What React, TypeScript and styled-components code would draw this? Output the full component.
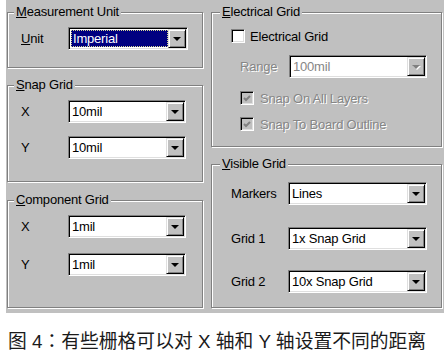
import React from 'react';
import styled, { createGlobalStyle } from 'styled-components';

const GlobalStyle = createGlobalStyle`
    html, body {
        margin: 0;
        padding: 0;
        background: #fff;
    }
    body {
        font-family: "Liberation Sans", Arial, sans-serif;
    }
`;

const Page = styled.div`
    width: 447px;
    height: 361px;
    padding-left: 6px;
    box-sizing: border-box;
`;

const Dialog = styled.div`
    width: 438px;
    height: 313px;
    box-sizing: border-box;
    padding: 12px 0 0 1px;
    background: #c0c0c0;
    display: grid;
    grid-template-columns: 196px 231px;
    column-gap: 8px;
    align-items: start;
    font-size: 13px;
    letter-spacing: -0.2px;
    color: #000;
`;

const Column = styled.div`
    display: flex;
    flex-direction: column;
`;

const Group = styled.div<{ $h: number; $mt?: number; $pl: number }>`
    height: ${({ $h }) => $h}px;
    margin-top: ${({ $mt }) => $mt ?? 0}px;
    padding-left: ${({ $pl }) => $pl}px;
    box-sizing: border-box;
    border: 1px solid #808080;
    box-shadow: inset 1px 1px 0 #fff, 1px 1px 0 #fff;
    display: flex;
    flex-direction: column;
`;

const Legend = styled.div<{ $ml: number }>`
    align-self: flex-start;
    height: 16px;
    line-height: 16px;
    margin: -9px 0 0 ${({ $ml }) => $ml}px;
    padding: 0 2px;
    background: #c0c0c0;
    white-space: nowrap;
`;

const Row = styled.div<{ $mt: number; $indent?: number }>`
    display: flex;
    align-items: center;
    height: 23px;
    margin-top: ${({ $mt }) => $mt}px;
    padding-left: ${({ $indent }) => $indent ?? 0}px;
`;

const CheckRow = styled(Row)`
    height: 16px;
    gap: ${({ $indent }) => ($indent ? 6 : 5)}px;
`;

const Label = styled.span<{ $w?: number; $disabled?: boolean }>`
    width: ${({ $w }) => ($w ? `${$w}px` : 'auto')};
    flex: none;
    white-space: nowrap;
    color: ${({ $disabled }) => ($disabled ? '#868686' : '#000')};
    text-shadow: ${({ $disabled }) => ($disabled ? '1px 1px 0 #fff' : 'none')};
`;

const Combo = styled.div<{ $w: number }>`
    width: ${({ $w }) => $w}px;
    height: 23px;
    box-sizing: border-box;
    padding: 1px;
    display: flex;
    background: #fff;
    border: 1px solid;
    border-color: #808080 #fff #fff #808080;
    box-shadow: inset 1px 1px 0 #000, inset -1px -1px 0 #dfdfdf;
`;

const Field = styled.div<{ $selected?: boolean; $disabled?: boolean }>`
    flex: 1;
    display: flex;
    align-items: center;
    box-sizing: border-box;
    margin: ${({ $selected }) => ($selected ? '1px 0 1px 1px' : '0')};
    padding-left: ${({ $selected }) => ($selected ? '1px' : '2px')};
    background: ${({ $selected }) => ($selected ? '#000080' : 'transparent')};
    border: ${({ $selected }) => ($selected ? '1px dotted #d6d690' : 'none')};
    color: ${({ $selected, $disabled }) => ($selected ? '#fff' : $disabled ? '#868686' : '#000')};
    white-space: nowrap;
`;

const DropButton = styled.div`
    width: 18px;
    flex: none;
    box-sizing: border-box;
    background: #c0c0c0;
    border: 1px solid;
    border-color: #dfdfdf #000 #000 #dfdfdf;
    box-shadow: inset 1px 1px 0 #fff, inset -1px -1px 0 #808080;
    display: flex;
    align-items: center;
    justify-content: center;
`;

const Arrow = styled.span<{ $disabled?: boolean }>`
    width: 0;
    height: 0;
    border-left: 4px solid transparent;
    border-right: 4px solid transparent;
    border-top: 4px solid ${({ $disabled }) => ($disabled ? '#808080' : '#000')};
    filter: ${({ $disabled }) => ($disabled ? 'drop-shadow(1px 1px 0 #fff)' : 'none')};
`;

const CheckBox = styled.span<{ $disabled?: boolean }>`
    width: 14px;
    height: 14px;
    flex: none;
    box-sizing: border-box;
    border: 1px solid;
    border-color: #808080 #fff #fff #808080;
    box-shadow: inset 1px 1px 0 #000, inset -1px -1px 0 #dfdfdf;
    background: ${({ $disabled }) => ($disabled ? '#c0c0c0' : '#fff')};
    display: flex;
    align-items: center;
    justify-content: center;
`;

const Caption = styled.div`
    margin-top: 15px;
    padding-left: 2px;
    height: 24px;
    line-height: 24px;
    font-family: "Liberation Sans", "Noto Sans CJK SC", sans-serif;
    font-size: 18.8px;
    color: #1a1a1a;
    white-space: nowrap;
`;

const FullColon = styled.span`
    font-family: "Noto Sans CJK TC", "Noto Sans CJK SC", sans-serif;
`;

function Dropdown({ w, value, selected, disabled }: { w: number; value: string; selected?: boolean; disabled?: boolean }) {
    return (
        <Combo $w={w}>
            <Field $selected={selected} $disabled={disabled}>
                {value}
            </Field>
            <DropButton>
                <Arrow $disabled={disabled} />
            </DropButton>
        </Combo>
    );
}

function Check({ checked, disabled }: { checked?: boolean; disabled?: boolean }) {
    return (
        <CheckBox $disabled={disabled}>
            {checked && (
                <svg width='8' height='7' viewBox='0 0 8 7'>
                    <polyline points='1,3 3,5 7,1' fill='none' stroke={disabled ? '#808080' : '#000'} strokeWidth='2' />
                </svg>
            )}
        </CheckBox>
    );
}

export default function App() {
    return (
        <Page>
            <GlobalStyle />
            <Dialog>
                <Column>
                    <Group $h={56} $pl={13}>
                        <Legend $ml={-7}>
                            <u>M</u>easurement Unit
                        </Legend>
                        <Row $mt={7}>
                            <Label $w={47}>
                                <u>U</u>nit
                            </Label>
                            <Dropdown w={120} value='Imperial' selected />
                        </Row>
                    </Group>

                    <Group $h={97} $mt={17} $pl={13}>
                        <Legend $ml={-7}>
                            <u>S</u>nap Grid
                        </Legend>
                        <Row $mt={7}>
                            <Label $w={47}>X</Label>
                            <Dropdown w={118} value='10mil' />
                        </Row>
                        <Row $mt={13}>
                            <Label $w={47}>Y</Label>
                            <Dropdown w={118} value='10mil' />
                        </Row>
                    </Group>

                    <Group $h={108} $mt={18} $pl={13}>
                        <Legend $ml={-7}>
                            <u>C</u>omponent Grid
                        </Legend>
                        <Row $mt={7}>
                            <Label $w={47}>X</Label>
                            <Dropdown w={118} value='1mil' />
                        </Row>
                        <Row $mt={15}>
                            <Label $w={47}>Y</Label>
                            <Dropdown w={118} value='1mil' />
                        </Row>
                    </Group>
                </Column>

                <Column>
                    <Group $h={135} $pl={19}>
                        <Legend $ml={-11}>
                            <u>E</u>lectrical Grid
                        </Legend>
                        <CheckRow $mt={8}>
                            <Check />
                            <Label>Electrical Grid</Label>
                        </CheckRow>
                        <Row $mt={11} $indent={9}>
                            <Label $w={49} $disabled>
                                Range
                            </Label>
                            <Dropdown w={138} value='100mil' disabled />
                        </Row>
                        <CheckRow $mt={12} $indent={9}>
                            <Check checked disabled />
                            <Label $disabled>Snap On All Layers</Label>
                        </CheckRow>
                        <CheckRow $mt={10} $indent={9}>
                            <Check checked disabled />
                            <Label $disabled>Snap To Board Outline</Label>
                        </CheckRow>
                    </Group>

                    <Group $h={144} $mt={17} $pl={19}>
                        <Legend $ml={-11}>
                            <u>V</u>isible Grid
                        </Legend>
                        <Row $mt={10}>
                            <Label $w={57}>Markers</Label>
                            <Dropdown w={139} value='Lines' />
                        </Row>
                        <Row $mt={22}>
                            <Label $w={57}>Grid 1</Label>
                            <Dropdown w={139} value='1x Snap Grid' />
                        </Row>
                        <Row $mt={20}>
                            <Label $w={57}>Grid 2</Label>
                            <Dropdown w={139} value='10x Snap Grid' />
                        </Row>
                    </Group>
                </Column>
            </Dialog>
            <Caption>
                图 4<FullColon>：</FullColon>有些栅格可以对 X 轴和 Y 轴设置不同的距离
            </Caption>
        </Page>
    );
}
